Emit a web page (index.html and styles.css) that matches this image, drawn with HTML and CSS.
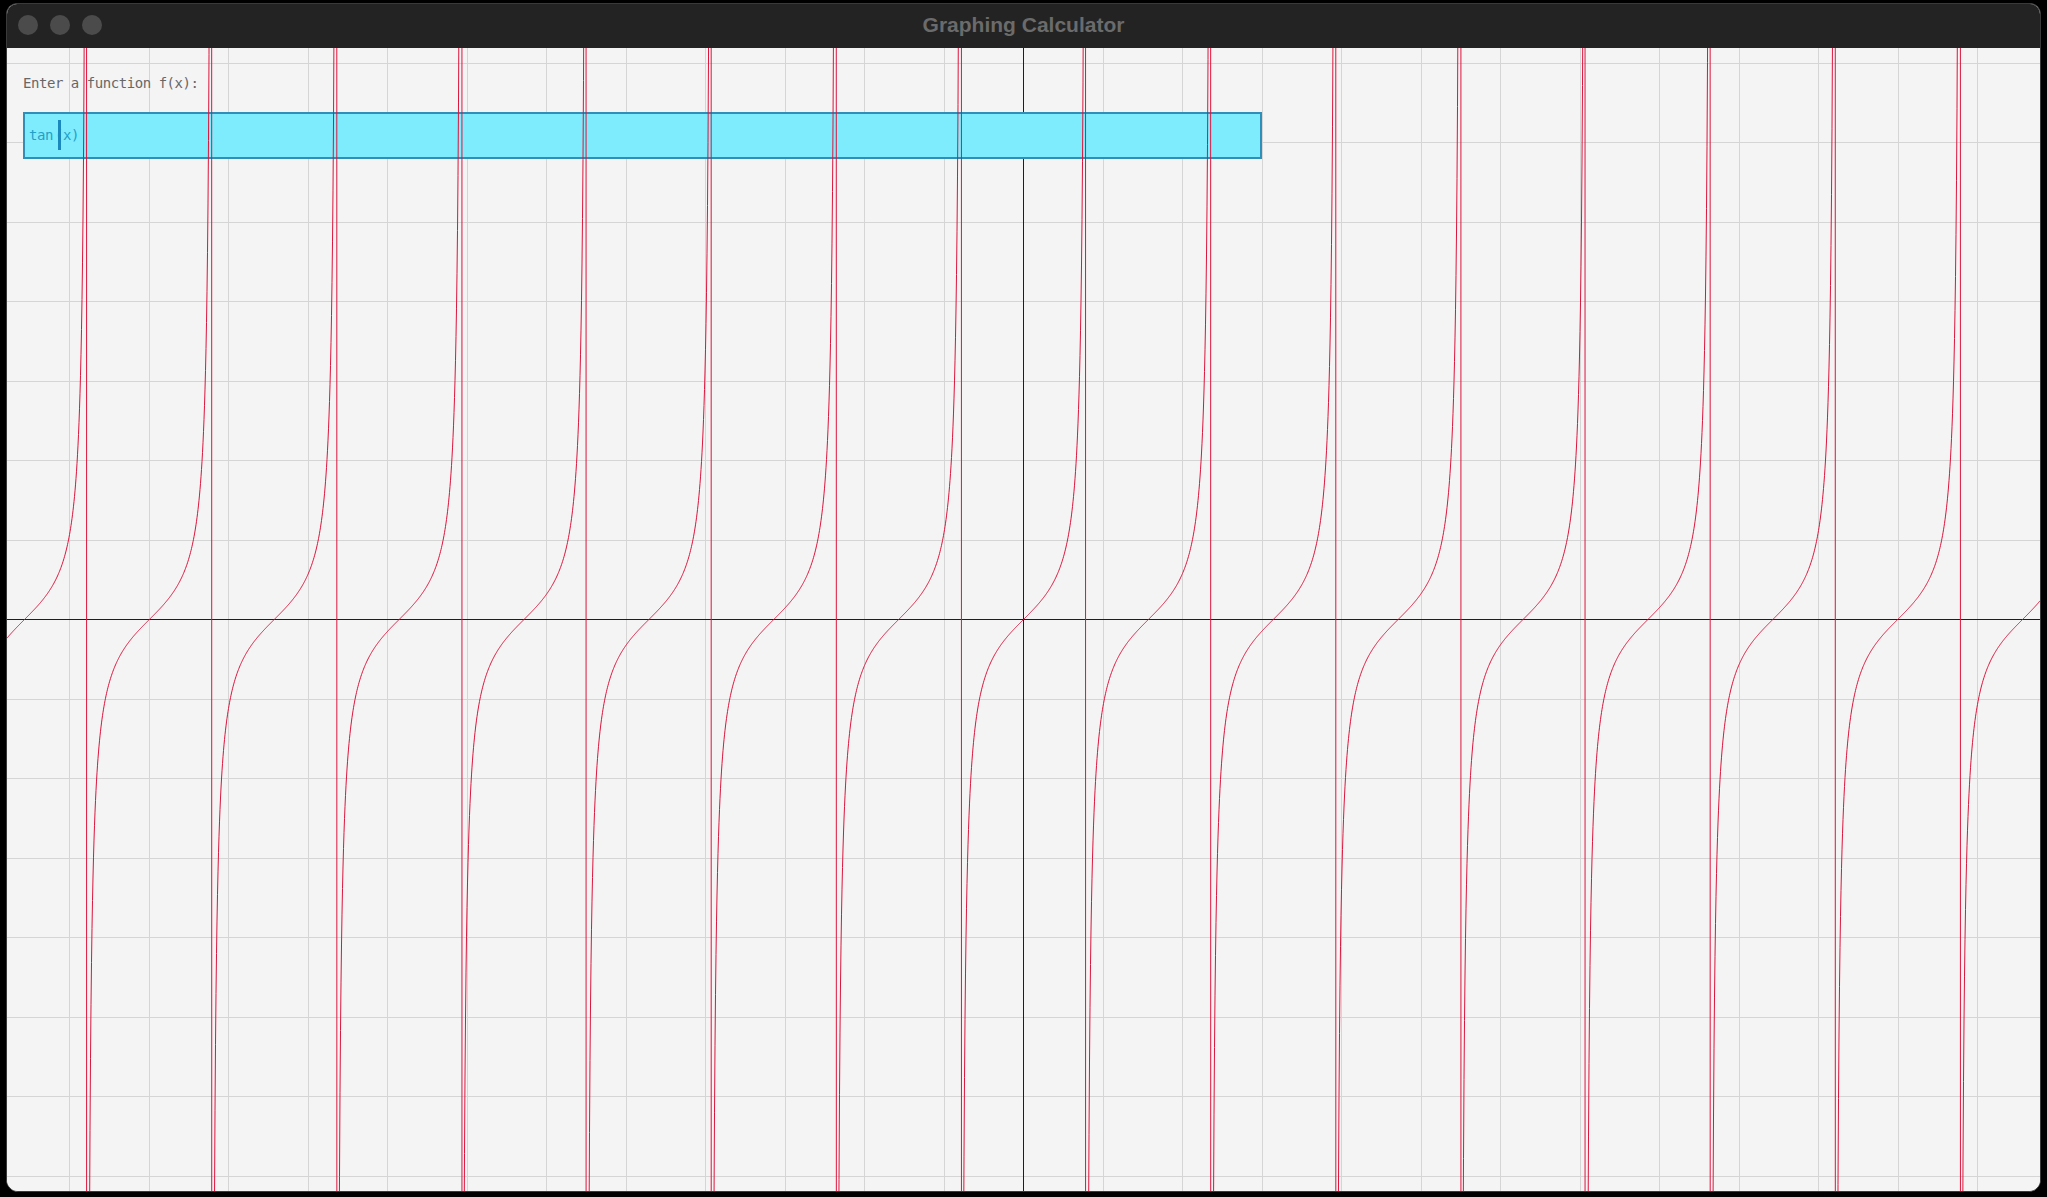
FILE: index.html
```html
<!DOCTYPE html>
<html lang="en">
<head>
<meta charset="utf-8">
<title>Graphing Calculator</title>
<link rel="stylesheet" href="styles.css">
</head>
<body>
<div class="window">
  <header class="titlebar">
    <div class="lights">
      <span class="light"></span>
      <span class="light"></span>
      <span class="light"></span>
    </div>
    <div class="title">Graphing Calculator</div>
    <div class="spacer"></div>
  </header>
  <main class="plot">
    <svg class="layer grid-layer" xmlns="http://www.w3.org/2000/svg"></svg>
    <div class="controls">
      <label class="prompt">Enter a function f(x):</label>
      <div class="field"><span class="field-text">tan</span><span class="caret"></span><span class="field-text">(x)</span></div>
    </div>
    <svg class="layer curve-layer" xmlns="http://www.w3.org/2000/svg"></svg>
  </main>
</div>
<script src="script.js"></script>
</body>
</html>
```

FILE: styles.css
```css
html, body {
  margin: 0;
  padding: 0;
  background: #000;
  overflow: hidden;
}

body {
  width: 2047px;
  height: 1197px;
}

.window {
  box-sizing: border-box;
  margin: 3px 0 0 6px;
  width: 2035px;
  height: 1189px;
  border: 1px solid #3a3a3a;
  border-radius: 11px 11px 12px 12px;
  overflow: hidden;
  display: flex;
  flex-direction: column;
  background: #f4f4f4;
}

.titlebar {
  box-sizing: border-box;
  height: 44px;
  flex: 0 0 44px;
  background: #232323;
  display: grid;
  grid-template-columns: 1fr auto 1fr;
  align-items: center;
  padding: 0 0 3px 0;
}

.lights {
  display: flex;
  gap: 12px;
  padding-left: 11px;
}

.light {
  width: 20px;
  height: 20px;
  border-radius: 50%;
  background: #4b4b4b;
}

.title {
  font-family: "Liberation Sans", Arial, sans-serif;
  font-weight: bold;
  font-size: 21px;
  color: #6b6b6b;
  letter-spacing: 0;
}

.plot {
  position: relative;
  flex: 1 1 auto;
  background: #f4f4f4;
  overflow: hidden;
}

.layer {
  position: absolute;
  left: 0;
  top: 0;
  pointer-events: none;
}

.grid-layer {
  z-index: 0;
}

.curve-layer {
  z-index: 2;
}

.grid-line {
  stroke: #d5d5d5;
  stroke-width: 1;
}

.axis-line {
  stroke: #1e1e1e;
  stroke-width: 1;
}

.curve {
  fill: none;
  stroke: #dc143c;
  stroke-width: 1;
  stroke-linejoin: round;
}

.controls {
  position: relative;
  z-index: 1;
  padding: 27px 0 0 16px;
  font-family: "DejaVu Sans Mono", "Liberation Mono", monospace;
  font-size: 14px;
  letter-spacing: -0.45px;
}

.prompt {
  display: block;
  line-height: 17px;
  color: #676767;
  margin-bottom: 20px;
}

.field {
  box-sizing: border-box;
  width: 1239px;
  height: 47px;
  border: 2px solid #2f8fb8;
  background: #7fecfd;
  padding: 0 4px;
  display: flex;
  align-items: center;
  color: #22a1c8;
}

.field-text {
  line-height: 43px;
}

.caret {
  width: 3px;
  height: 30px;
  background: #1a87bd;
  margin: -2px -6px 0 5px;
  position: relative;
  z-index: 1;
}
```

FILE: script.js
```js
(function () {
  var NS = 'http://www.w3.org/2000/svg';
  var plot = document.querySelector('.plot');
  var gridSvg = document.querySelector('.grid-layer');
  var curveSvg = document.querySelector('.curve-layer');
  var W = plot.clientWidth;
  var H = plot.clientHeight;
  var UNIT = 39.75;
  var STEP = 79.5;
  var ox = W / 2;
  var oy = H / 2;

  [gridSvg, curveSvg].forEach(function (s) {
    s.setAttribute('width', W);
    s.setAttribute('height', H);
    s.setAttribute('viewBox', '0 0 ' + W + ' ' + H);
  });

  function snap(v) { return Math.round(v - 0.5) + 0.5; }

  function line(parent, x1, y1, x2, y2, cls) {
    var l = document.createElementNS(NS, 'line');
    l.setAttribute('x1', x1);
    l.setAttribute('y1', y1);
    l.setAttribute('x2', x2);
    l.setAttribute('y2', y2);
    l.setAttribute('class', cls);
    parent.appendChild(l);
  }

  var kx = Math.ceil(ox / STEP) + 1;
  for (var i = -kx; i <= kx; i++) {
    if (i === 0) continue;
    var x = snap(ox + i * STEP);
    line(gridSvg, x, 0, x, H, 'grid-line');
  }
  var ky = Math.ceil(oy / STEP) + 1;
  for (var j = -ky; j <= ky; j++) {
    if (j === 0) continue;
    var y = snap(oy + j * STEP);
    line(gridSvg, 0, y, W, y, 'grid-line');
  }
  line(gridSvg, snap(ox), 0, snap(ox), H, 'axis-line');
  line(gridSvg, 0, snap(oy), W, snap(oy), 'axis-line');

  var d = [];
  var LIM = 100000;
  for (var px = 0; px <= W; px += 0.5) {
    var xv = (px - ox) / UNIT;
    var py = oy - Math.tan(xv) * UNIT;
    if (py < -LIM) py = -LIM;
    if (py > LIM) py = LIM;
    d.push((d.length ? 'L' : 'M') + px.toFixed(2) + ' ' + py.toFixed(2));
  }
  var path = document.createElementNS(NS, 'path');
  path.setAttribute('d', d.join(''));
  path.setAttribute('class', 'curve');
  curveSvg.appendChild(path);
})();
```
